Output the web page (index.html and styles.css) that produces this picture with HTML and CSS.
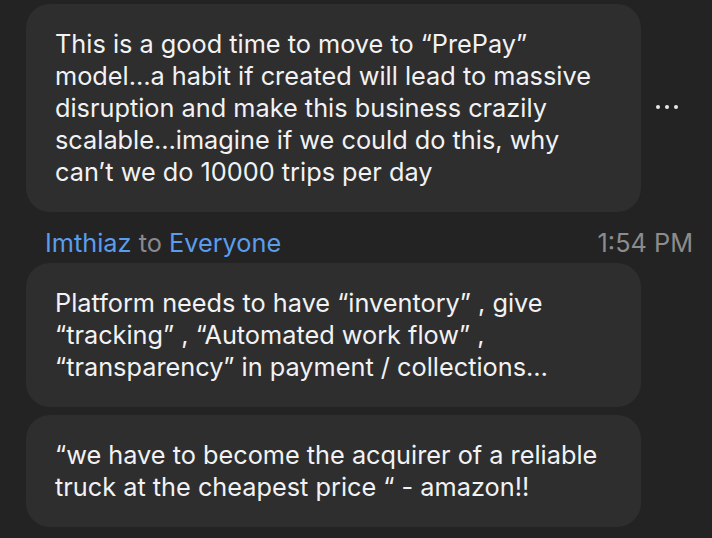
FILE: index.html
```html
<!DOCTYPE html>
<html>
<head>
<meta charset="utf-8">
<link rel="stylesheet" href="styles.css">
</head>
<body>
<div class="chat">
  <div class="row">
    <div class="bubble first">This is a good time to move to “PrePay”<br>model…a habit if created will lead to massive<br>disruption and make this business crazily<br>scalable…imagine if we could do this, why<br>can’t we do 10000 trips per day</div>
    <div class="more"><span></span><span></span><span></span></div>
  </div>
  <div class="meta">
    <div class="who"><span class="name">Imthiaz</span> <span class="to">to</span> <span class="name">Everyone</span></div>
    <div class="time">1:54 PM</div>
  </div>
  <div class="row">
    <div class="bubble">Platform needs to have “inventory” , give<br>“tracking” , “Automated work flow” ,<br>“transparency” in payment / collections…</div>
  </div>
  <div class="row">
    <div class="bubble">“we have to become the acquirer of a reliable<br>truck at the cheapest price “ - amazon!!</div>
  </div>
</div>
</body>
</html>
```

FILE: styles.css
```css
html, body {
  margin: 0;
  padding: 0;
  background: #232323;
  height: 100%;
}
body {
  font-family: Inter, "Noto Sans", sans-serif;
  color: #f2f2f4;
  overflow: hidden;
}
.chat {
  padding: 4px 0 0 26px;
  display: flex;
  flex-direction: column;
}
.row {
  display: flex;
  align-items: center;
}
.row + .row {
  margin-top: 8px;
}
.bubble {
  width: 615px;
  box-sizing: border-box;
  background: #2e2e2e;
  border-radius: 24px;
  padding: 24px 20px 24px 29px;
  font-size: 25.3px;
  line-height: 32px;
  white-space: nowrap;
}
.more {
  display: flex;
  gap: 5px;
  margin-left: 15px;
  margin-top: -2px;
}
.more span {
  width: 4px;
  height: 4px;
  border-radius: 50%;
  background: #e8e8e8;
}
.meta {
  display: flex;
  justify-content: space-between;
  align-items: center;
  height: 51px;
  padding: 10px 19px 0 19px;
  font-size: 25.3px;
  box-sizing: border-box;
}
.name {
  color: #5b9ded;
}
.to {
  color: #8a8a8e;
}
.time {
  color: #8c8c8c;
}
```
